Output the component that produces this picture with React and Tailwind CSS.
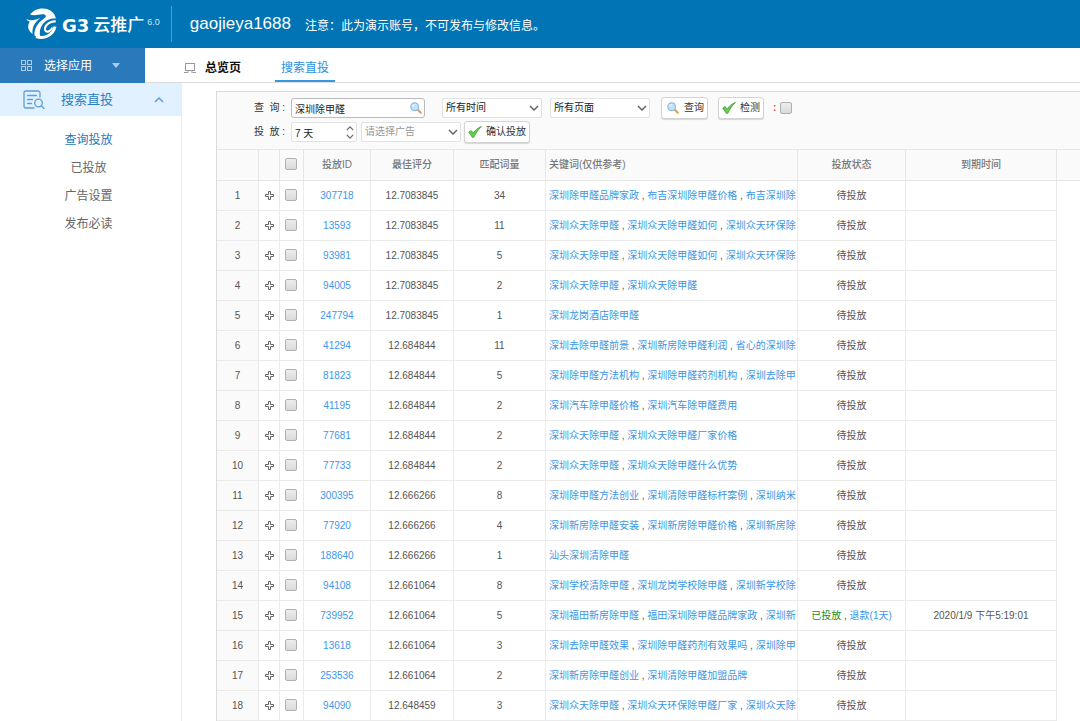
import React from "react";

/* ─── Data ────────────────────────────────────────────── */

const ROWS = [
  { id: "307718", score: "12.7083845", count: 34, words: ["深圳除甲醛品牌家政", "布吉深圳除甲醛价格", "布吉深圳除"] },
  { id: "13593", score: "12.7083845", count: 11, words: ["深圳众天除甲醛", "深圳众天除甲醛如何", "深圳众天环保除"] },
  { id: "93981", score: "12.7083845", count: 5, words: ["深圳众天除甲醛", "深圳众天除甲醛如何", "深圳众天环保除"] },
  { id: "94005", score: "12.7083845", count: 2, words: ["深圳众天除甲醛", "深圳众天除甲醛"] },
  { id: "247794", score: "12.7083845", count: 1, words: ["深圳龙岗酒店除甲醛"] },
  { id: "41294", score: "12.684844", count: 11, words: ["深圳去除甲醛前景", "深圳新房除甲醛利润", "省心的深圳除"] },
  { id: "81823", score: "12.684844", count: 5, words: ["深圳除甲醛方法机构", "深圳除甲醛药剂机构", "深圳去除甲"] },
  { id: "41195", score: "12.684844", count: 2, words: ["深圳汽车除甲醛价格", "深圳汽车除甲醛费用"] },
  { id: "77681", score: "12.684844", count: 2, words: ["深圳众天除甲醛", "深圳众天除甲醛厂家价格"] },
  { id: "77733", score: "12.684844", count: 2, words: ["深圳众天除甲醛", "深圳众天除甲醛什么优势"] },
  { id: "300395", score: "12.666266", count: 8, words: ["深圳除甲醛方法创业", "深圳清除甲醛标杆案例", "深圳纳米"] },
  { id: "77920", score: "12.666266", count: 4, words: ["深圳新房除甲醛安装", "深圳新房除甲醛价格", "深圳新房除"] },
  { id: "188640", score: "12.666266", count: 1, words: ["汕头深圳清除甲醛"] },
  { id: "94108", score: "12.661064", count: 8, words: ["深圳学校清除甲醛", "深圳龙岗学校除甲醛", "深圳新学校除"] },
  { id: "739952", score: "12.661064", count: 5, words: ["深圳福田新房除甲醛", "福田深圳除甲醛品牌家政", "深圳新"], refund: "退款(1天)", expires: "2020/1/9 下午5:19:01" },
  { id: "13618", score: "12.661064", count: 3, words: ["深圳去除甲醛效果", "深圳除甲醛药剂有效果吗", "深圳除甲"] },
  { id: "253536", score: "12.661064", count: 2, words: ["深圳新房除甲醛创业", "深圳清除甲醛加盟品牌"] },
  { id: "94090", score: "12.648459", count: 3, words: ["深圳众天除甲醛", "深圳众天环保除甲醛厂家", "深圳众天除"] },
];

const MENU = ["查询投放", "已投放", "广告设置", "发布必读"];

/* ─── Icons ───────────────────────────────────────────── */

function LogoMark() {
  return (
    <svg viewBox="0 0 32 32" className="size-8 shrink-0" fill="#fff" aria-hidden="true">
      {/* cap running down into the stem */}
      <path d="M4 6.500C8 2 12 0.500 17 0.500C24 0.500 29 5 29.800 10.500C24 9.800 19.500 12.500 16.500 16.500C13.800 20.500 13 25 14.500 29.500C12 29.500 10 28.800 8.500 27.500C8 21 11.500 14.800 17.500 11C21 8.800 20.500 6.300 16.500 6.300C12 6.300 9 8.300 4 6.500Z" />
      {/* left leaf */}
      <path d="M0.200 11C5 13 9.500 12.300 14.500 9.800C8.800 14 6 19.500 6.500 26C4.500 24.500 3 22.500 2.200 20C2 17.500 2.600 15.500 3.800 13.800C2.300 13.300 1.200 12.500 0.200 11Z" />
      {/* lower hook and rim */}
      <g fill="none" stroke="#fff">
        <path d="M29.800 13.500C24.500 12.800 20 16.500 19 20C18.300 23 20.500 24.500 23 23.300C24.800 22.500 25.800 21 26.300 19.500" strokeWidth="2.200" />
        <path d="M10 28.500C18 31.500 27 27.500 29 18.500" strokeWidth="3" />
      </g>
    </svg>
  );
}

function GridIcon() {
  return (
    <svg viewBox="0 0 12 12" className="size-3" fill="none" stroke="#a9cdea" aria-hidden="true">
      <rect x="0.500" y="0.500" width="4" height="4" />
      <rect x="6.500" y="0.500" width="4" height="4" />
      <rect x="0.500" y="6.500" width="4" height="4" />
      <rect x="6.500" y="6.500" width="4" height="4" />
    </svg>
  );
}

function MonitorIcon() {
  return (
    <svg viewBox="0 0 12 12" className="size-3" fill="none" stroke="#999" aria-hidden="true">
      <rect x="1.500" y="1.500" width="9" height="7" />
      <path d="M0 10.500h3.500M8.500 10.500h3.500M4 9v2M8 9v2" />
    </svg>
  );
}

function DocSearchIcon() {
  return (
    <svg viewBox="0 0 22 20" className="h-5 w-[22px]" fill="none" stroke="#5a9fdc" strokeWidth="1.300" strokeLinecap="round" aria-hidden="true">
      <path d="M17 7V3a2 2 0 0 0-2-2H3a2 2 0 0 0-2 2v13a2 2 0 0 0 2 2h8" />
      <path d="M4.500 5.500h9M4.500 9.500h5M4.500 13.500h4" />
      <circle cx="15.500" cy="13" r="3.800" />
      <path d="M18.300 15.800L21 18.500" />
    </svg>
  );
}

function MagnifierIcon() {
  return (
    <svg viewBox="0 0 12 12" className="size-3 shrink-0" aria-hidden="true">
      <path d="M7.800 7.800L10.800 10.800" stroke="#e0a04e" strokeWidth="2" strokeLinecap="round" />
      <circle cx="4.700" cy="4.700" r="3.900" fill="#c4e2f8" stroke="#8fbde6" strokeWidth="1.200" />
      <path d="M2.600 4.600a2.200 2.200 0 0 1 2-2.100" stroke="#fff" fill="none" />
    </svg>
  );
}

function TickIcon() {
  return (
    <svg viewBox="0 0 14 12" className="h-3 w-[14px] shrink-0" aria-hidden="true">
      <path d="M0.800 6.200L3.200 4.500L5.200 7.200C7.300 4 9.800 1.800 13.400 0.500C10.300 3.500 7.800 7 5.800 11.300H4.300Z" fill="#6ccb4e" stroke="#3aa033" strokeWidth="0.800" strokeLinejoin="round" />
    </svg>
  );
}

function Chevron({ className }) {
  return (
    <svg viewBox="0 0 10 6" className={className} fill="none" stroke="#666" strokeWidth="1.500" aria-hidden="true">
      <path d="M1 1l4 4 4-4" />
    </svg>
  );
}

function PlusIcon() {
  return (
    <svg viewBox="0 0 9 9" className="mx-auto size-[9px]" fill="#fff" stroke="#666" aria-hidden="true">
      <path d="M3.500 0.500h2v3h3v2h-3v3h-2v-3h-3v-2h3z" />
    </svg>
  );
}

/* ─── Form controls ───────────────────────────────────── */

function Tick({ label }) {
  return (
    <input
      type="checkbox"
      aria-label={label}
      className="block size-3 appearance-none rounded-[2px] border border-[#b0b0b0] bg-linear-to-b from-[#ececec] to-[#dadada] checked:bg-sky-300"
    />
  );
}

function Picker({ label, value, muted }) {
  return (
    <div className="relative w-[100px]">
      <select
        aria-label={label}
        className={`block h-5 w-full appearance-none rounded-[2px] border border-[#e2e2e2] bg-white px-[3px] ${muted ? "text-[#999]" : "text-[#222]"}`}
      >
        <option>{value}</option>
      </select>
      <Chevron className="pointer-events-none absolute top-[7px] right-[3px] h-[6px] w-[10px]" />
    </div>
  );
}

function ToolButton({ icon, children }) {
  return (
    <button
      type="button"
      className="flex h-[22px] items-center gap-1 rounded-[3px] border border-[#d4d4d4] bg-white px-[3px] text-[#333] shadow-[0_1px_1px_rgba(0,0,0,0.15)]"
    >
      {icon}
      {children}
    </button>
  );
}

/* ─── Page sections ───────────────────────────────────── */

function TopBar() {
  return (
    <header className="flex h-12 items-center bg-[#0074b4] pl-[26px] text-white">
      <LogoMark />
      <div className="ml-1 flex items-end pt-[3px] leading-6">
        <span className="font-['DejaVu_Sans'] text-[18px] font-bold">G3</span>
        <span className="ml-1 text-[17px] font-medium">云推广</span>
        <sup className="top-0 ml-[3px] self-start text-[9px] leading-4 text-[#cfe6f5]">6.0</sup>
      </div>
      <div className="ml-[11px] h-9 w-px bg-[#4a9fd0]" />
      <span className="ml-[18px] text-[17px]">gaojieya1688</span>
      <span className="ml-[14px] pt-[3px] text-[12px]">注意：此为演示账号，不可发布与修改信息。</span>
    </header>
  );
}

function NavBar() {
  return (
    <nav className="flex h-[35px] text-[12px]">
      <button type="button" className="flex w-[145px] items-center bg-[#2a79bb] pl-[21px] text-white">
        <GridIcon />
        <span className="ml-[11px]">选择应用</span>
        <span className="ml-5 border-x-4 border-t-[5px] border-x-transparent border-t-[#a9cdea]" />
      </button>
      <div className="flex flex-1 border-b border-[#dcdcdc] pl-[39px]">
        <a href="#overview" className="flex items-center gap-[9px] pt-[6px] font-bold text-[#111]">
          <MonitorIcon />
          总览页
        </a>
        <a href="#search" className="ml-[34px] flex w-[60px] items-center justify-center border-b-2 border-[#3399e6] pt-2 text-[#2b8fe0]">
          搜索直投
        </a>
      </div>
    </nav>
  );
}

function Sidebar() {
  return (
    <aside className="w-[182px] shrink-0 border-r border-[#e8eef4]">
      <button type="button" className="flex h-[33px] w-full items-center bg-[#e1f1ff] pl-[23px] text-[13px] text-[#2b7fc0]">
        <DocSearchIcon />
        <span className="ml-4">搜索直投</span>
        <Chevron className="ml-[41px] h-[6px] w-[10px] rotate-180 stroke-[#5a9fdc]" />
      </button>
      <ul className="pt-[10px] text-[12px]">
        {MENU.map((item, i) => (
          <li key={item}>
            <a href="#menu" className={`flex h-[28px] items-center justify-center pr-1 ${i === 0 ? "text-[#1c79c0]" : "text-[#666]"}`}>
              {item}
            </a>
          </li>
        ))}
      </ul>
    </aside>
  );
}

function Toolbar() {
  return (
    <form className="bg-[#fafafa] pt-1 pb-[5px] pl-[37px] text-[#333]">
      <div className="flex h-6 items-center">
        <label htmlFor="keyword" className="w-[37px] whitespace-pre">查  询 :</label>
        <div className="relative w-[134px]">
          <input
            id="keyword"
            defaultValue="深圳除甲醛"
            className="block h-5 w-full rounded-[3px] border border-[#bbb] bg-white px-[3px] text-[#222]"
          />
          <span className="absolute top-1 right-[3px]">
            <MagnifierIcon />
          </span>
        </div>
        <div className="ml-[17px] flex items-center gap-2">
          <Picker label="时间" value="所有时间" />
          <Picker label="页面" value="所有页面" />
        </div>
        <div className="ml-[11px] flex items-center gap-[10px]">
          <ToolButton icon={<span className="pr-px pl-[2px]"><MagnifierIcon /></span>}>查询</ToolButton>
          <ToolButton icon={<TickIcon />}>检测</ToolButton>
        </div>
        <span className="mr-1 ml-[9px] font-bold text-[#e0442c]">:</span>
        <Tick label="自动检测" />
      </div>
      <div className="flex h-6 items-center">
        <label htmlFor="days" className="w-[37px] whitespace-pre">投  放 :</label>
        <div className="relative w-[66px]">
          <input
            id="days"
            defaultValue="7 天"
            className="block h-5 w-full rounded-[2px] border border-[#e2e2e2] bg-white px-[3px] text-[#222]"
          />
          <div className="absolute top-1 right-[3px] flex flex-col gap-[3px]">
            <button type="button" aria-label="增加">
              <Chevron className="block h-[5px] w-2 rotate-180" />
            </button>
            <button type="button" aria-label="减少">
              <Chevron className="block h-[5px] w-2" />
            </button>
          </div>
        </div>
        <div className="ml-1 flex items-center gap-[3px]">
          <Picker label="广告" value="请选择广告" muted />
          <ToolButton icon={<TickIcon />}>确认投放</ToolButton>
        </div>
      </div>
    </form>
  );
}

function ResultTable() {
  const th = "border-r border-[#e6e6e6] font-medium";
  const td = "border-r border-b border-[#ebebeb]";
  return (
    <table className="w-full table-fixed border-separate border-spacing-0 text-center">
      <colgroup>
        <col className="w-[42px]" />
        <col className="w-[21px]" />
        <col className="w-[24px]" />
        <col className="w-[67px]" />
        <col className="w-[83px]" />
        <col className="w-[92px]" />
        <col className="w-[252px]" />
        <col className="w-[108px]" />
        <col className="w-[151px]" />
        <col />
      </colgroup>
      <thead>
        <tr className="h-8 bg-[#fafafa] text-[#777] *:border-t *:border-b *:border-[#e6e6e6]">
          <th className={th} />
          <th className={th} />
          <th className={`${th} pb-[2px] pl-[5px]`}>
            <Tick label="全选" />
          </th>
          <th className={th}>投放ID</th>
          <th className={th}>最佳评分</th>
          <th className={th}>匹配词量</th>
          <th className={`${th} pl-[3px] text-left`}>关键词(仅供参考)</th>
          <th className={th}>投放状态</th>
          <th className={th}>到期时间</th>
          <th />
        </tr>
      </thead>
      <tbody className="text-[#555]">
        {ROWS.map((row, i) => (
          <tr key={row.id} className="h-[30px]">
            <td className={`${td} bg-[#fafafa]`}>{i + 1}</td>
            <td className={td}>
              <PlusIcon />
            </td>
            <td className={`${td} pb-[2px] pl-[5px]`}>
              <Tick label={row.id} />
            </td>
            <td className={td}>
              <a href="#detail" className="text-[#4096ee]">{row.id}</a>
            </td>
            <td className={td}>{row.score}</td>
            <td className={td}>{row.count}</td>
            <td className={`${td} overflow-hidden pl-[3px] text-left whitespace-nowrap`}>
              {row.words.map((word, n) => (
                <React.Fragment key={n}>
                  {n > 0 && " , "}
                  <a href="#word" className="text-[#3a96e6]">{word}</a>
                </React.Fragment>
              ))}
            </td>
            <td className={td}>
              {row.refund ? (
                <>
                  <span className="text-[#1a8a1a]">已投放</span>
                  {" , "}
                  <a href="#refund" className="text-[#3a96e6]">{row.refund}</a>
                </>
              ) : (
                "待投放"
              )}
            </td>
            <td className={td}>{row.expires}</td>
            <td />
          </tr>
        ))}
      </tbody>
    </table>
  );
}

/* ─── Main Component ─────────────────────────────────── */

export default function App() {
  return (
    <div className="flex min-h-screen flex-col bg-white font-['Liberation_Sans','Noto_Sans_CJK_SC',sans-serif]">
      <TopBar />
      <NavBar />
      <div className="flex flex-1">
        <Sidebar />
        <main className="min-w-0 flex-1 pt-2 pl-[34px]">
          <div className="border-t border-l border-[#dcdcdc] text-[10px] leading-4">
            <Toolbar />
            <ResultTable />
          </div>
        </main>
      </div>
    </div>
  );
}
